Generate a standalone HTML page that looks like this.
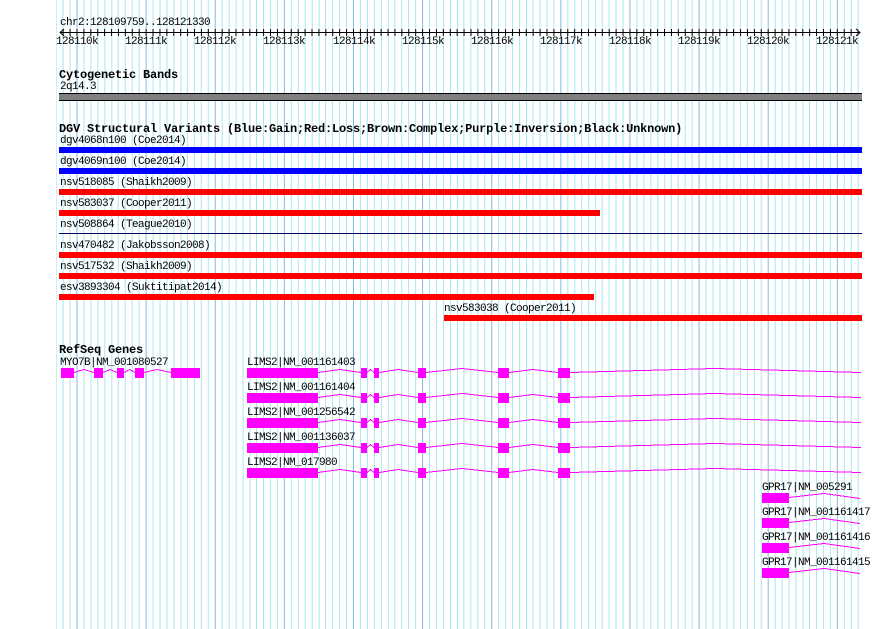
<!DOCTYPE html>
<html><head><meta charset="utf-8"><style>
html,body{margin:0;padding:0;background:#fff;width:890px;height:629px;overflow:hidden}
svg{display:block}
text{font-family:"Liberation Mono",monospace;font-size:11px;letter-spacing:-0.6px;fill:#000}
.t{font-weight:bold;font-size:12px;letter-spacing:-0.2px}
.in{fill:none;stroke:#f0f;stroke-width:1}
</style></head><body>
<svg width="890" height="629" viewBox="0 0 890 629" shape-rendering="crispEdges">
<defs>
<pattern id="grid" patternUnits="userSpaceOnUse" x="76.5" y="0" width="69.12" height="629">
<rect x="0" y="0" width="1" height="629" fill="#80bce4"/>
<rect x="6.912" width="1" height="629" fill="#a4e8f0"/>
<rect x="13.824" width="1" height="629" fill="#a4e8f0"/>
<rect x="20.736" width="1" height="629" fill="#a4e8f0"/>
<rect x="27.648" width="1" height="629" fill="#a4e8f0"/>
<rect x="34.56" width="1" height="629" fill="#a4e8f0"/>
<rect x="41.472" width="1" height="629" fill="#a4e8f0"/>
<rect x="48.384" width="1" height="629" fill="#a4e8f0"/>
<rect x="55.296" width="1" height="629" fill="#a4e8f0"/>
<rect x="62.208" width="1" height="629" fill="#a4e8f0"/>
</pattern>
<pattern id="ticks" patternUnits="userSpaceOnUse" x="76.5" y="0" width="6.912" height="40">
<rect x="0" y="29" width="1" height="7" fill="#000"/>
</pattern>
<g id="lims">
<rect x="247" y="368" width="71" height="10" fill="#f0f"/>
<rect x="361" y="368" width="6" height="10" fill="#f0f"/>
<rect x="374" y="368" width="5" height="10" fill="#f0f"/>
<rect x="418" y="368" width="8" height="10" fill="#f0f"/>
<rect x="498" y="368" width="11" height="10" fill="#f0f"/>
<rect x="558" y="368" width="12" height="10" fill="#f0f"/>
<polyline class="in" points="318,372.5 340,369.5 361,372.5"/>
<polyline class="in" points="367,372.5 370.5,369.5 374,372.5"/>
<polyline class="in" points="379,372.5 398,369.5 418,372.5"/>
<polyline class="in" points="426,372.5 462,368.5 498,372.5"/>
<polyline class="in" points="509,372.5 533,369.5 558,372.5"/>
<polyline class="in" points="570,372.5 715,368.5 861,372.5"/>
</g>
<g id="gpr">
<rect x="762" y="493" width="27" height="10" fill="#f0f"/>
<polyline class="in" points="789,497.5 824,493.5 860,498.5"/>
</g>
</defs>
<rect x="56" y="0" width="803" height="629" fill="url(#grid)"/>

<!-- ruler -->
<text x="60" y="25">chr2:128109759..128121330</text>
<rect x="60" y="32" width="800" height="1" fill="#000"/>
<rect x="62" y="29" width="796" height="7" fill="url(#ticks)"/>
<polyline points="64,29 60,32.5 64,36" fill="none" stroke="#000" shape-rendering="auto"/>
<polyline points="856,29 860,32.5 856,36" fill="none" stroke="#000" shape-rendering="auto"/>
<g text-anchor="middle">
<text x="77" y="44">128110k</text>
<text x="146" y="44">128111k</text>
<text x="215" y="44">128112k</text>
<text x="284" y="44">128113k</text>
<text x="354" y="44">128114k</text>
<text x="423" y="44">128115k</text>
<text x="492" y="44">128116k</text>
<text x="561" y="44">128117k</text>
<text x="630" y="44">128118k</text>
<text x="699" y="44">128119k</text>
<text x="768" y="44">128120k</text>
<text x="837" y="44">128121k</text>
</g>

<!-- cytobands -->
<text class="t" x="59" y="78">Cytogenetic Bands</text>
<text x="60" y="89">2q14.3</text>
<rect x="59" y="93" width="803" height="8" fill="#000"/>
<rect x="59" y="94" width="803" height="6" fill="#808080"/>

<!-- DGV -->
<text class="t" x="59" y="132">DGV Structural Variants (Blue:Gain;Red:Loss;Brown:Complex;Purple:Inversion;Black:Unknown)</text>
<text x="60" y="143">dgv4068n100 (Coe2014)</text>
<rect x="59" y="147" width="803" height="6" fill="#00f"/>
<text x="60" y="164">dgv4069n100 (Coe2014)</text>
<rect x="59" y="168" width="803" height="6" fill="#00f"/>
<text x="60" y="185">nsv518085 (Shaikh2009)</text>
<rect x="59" y="189" width="803" height="6" fill="#f00"/>
<text x="60" y="206">nsv583037 (Cooper2011)</text>
<rect x="59" y="210" width="541" height="6" fill="#f00"/>
<text x="60" y="227">nsv508864 (Teague2010)</text>
<rect x="59" y="233" width="803" height="1" fill="#000060"/>
<text x="60" y="248">nsv470482 (Jakobsson2008)</text>
<rect x="59" y="252" width="803" height="6" fill="#f00"/>
<text x="60" y="269">nsv517532 (Shaikh2009)</text>
<rect x="59" y="273" width="803" height="6" fill="#f00"/>
<text x="60" y="290">esv3893304 (Suktitipat2014)</text>
<rect x="59" y="294" width="535" height="6" fill="#f00"/>
<text x="444" y="311">nsv583038 (Cooper2011)</text>
<rect x="444" y="315" width="418" height="6" fill="#f00"/>

<!-- RefSeq -->
<text class="t" x="59" y="353">RefSeq Genes</text>
<text x="60" y="365">MYO7B|NM_001080527</text>
<g fill="#f0f">
<rect x="61" y="368" width="13" height="10"/>
<rect x="94" y="368" width="9" height="10"/>
<rect x="117" y="368" width="7" height="10"/>
<rect x="135" y="368" width="9" height="10"/>
<rect x="171" y="368" width="29" height="10"/>
</g>
<polyline class="in" points="74,372.5 84,369.5 94,372.5"/>
<polyline class="in" points="103,372.5 110,369.5 117,372.5"/>
<polyline class="in" points="124,372.5 129.5,369.5 135,372.5"/>
<polyline class="in" points="144,372.5 157,369.5 171,372.5"/>

<text x="247" y="365">LIMS2|NM_001161403</text>
<use href="#lims"/>
<text x="247" y="390">LIMS2|NM_001161404</text>
<use href="#lims" y="25"/>
<text x="247" y="415">LIMS2|NM_001256542</text>
<use href="#lims" y="50"/>
<text x="247" y="440">LIMS2|NM_001136037</text>
<use href="#lims" y="75"/>
<text x="247" y="465">LIMS2|NM_017980</text>
<use href="#lims" y="100"/>

<text x="762" y="490">GPR17|NM_005291</text>
<use href="#gpr"/>
<text x="762" y="515">GPR17|NM_001161417</text>
<use href="#gpr" y="25"/>
<text x="762" y="540">GPR17|NM_001161416</text>
<use href="#gpr" y="50"/>
<text x="762" y="565">GPR17|NM_001161415</text>
<use href="#gpr" y="75"/>
</svg>
</body></html>
